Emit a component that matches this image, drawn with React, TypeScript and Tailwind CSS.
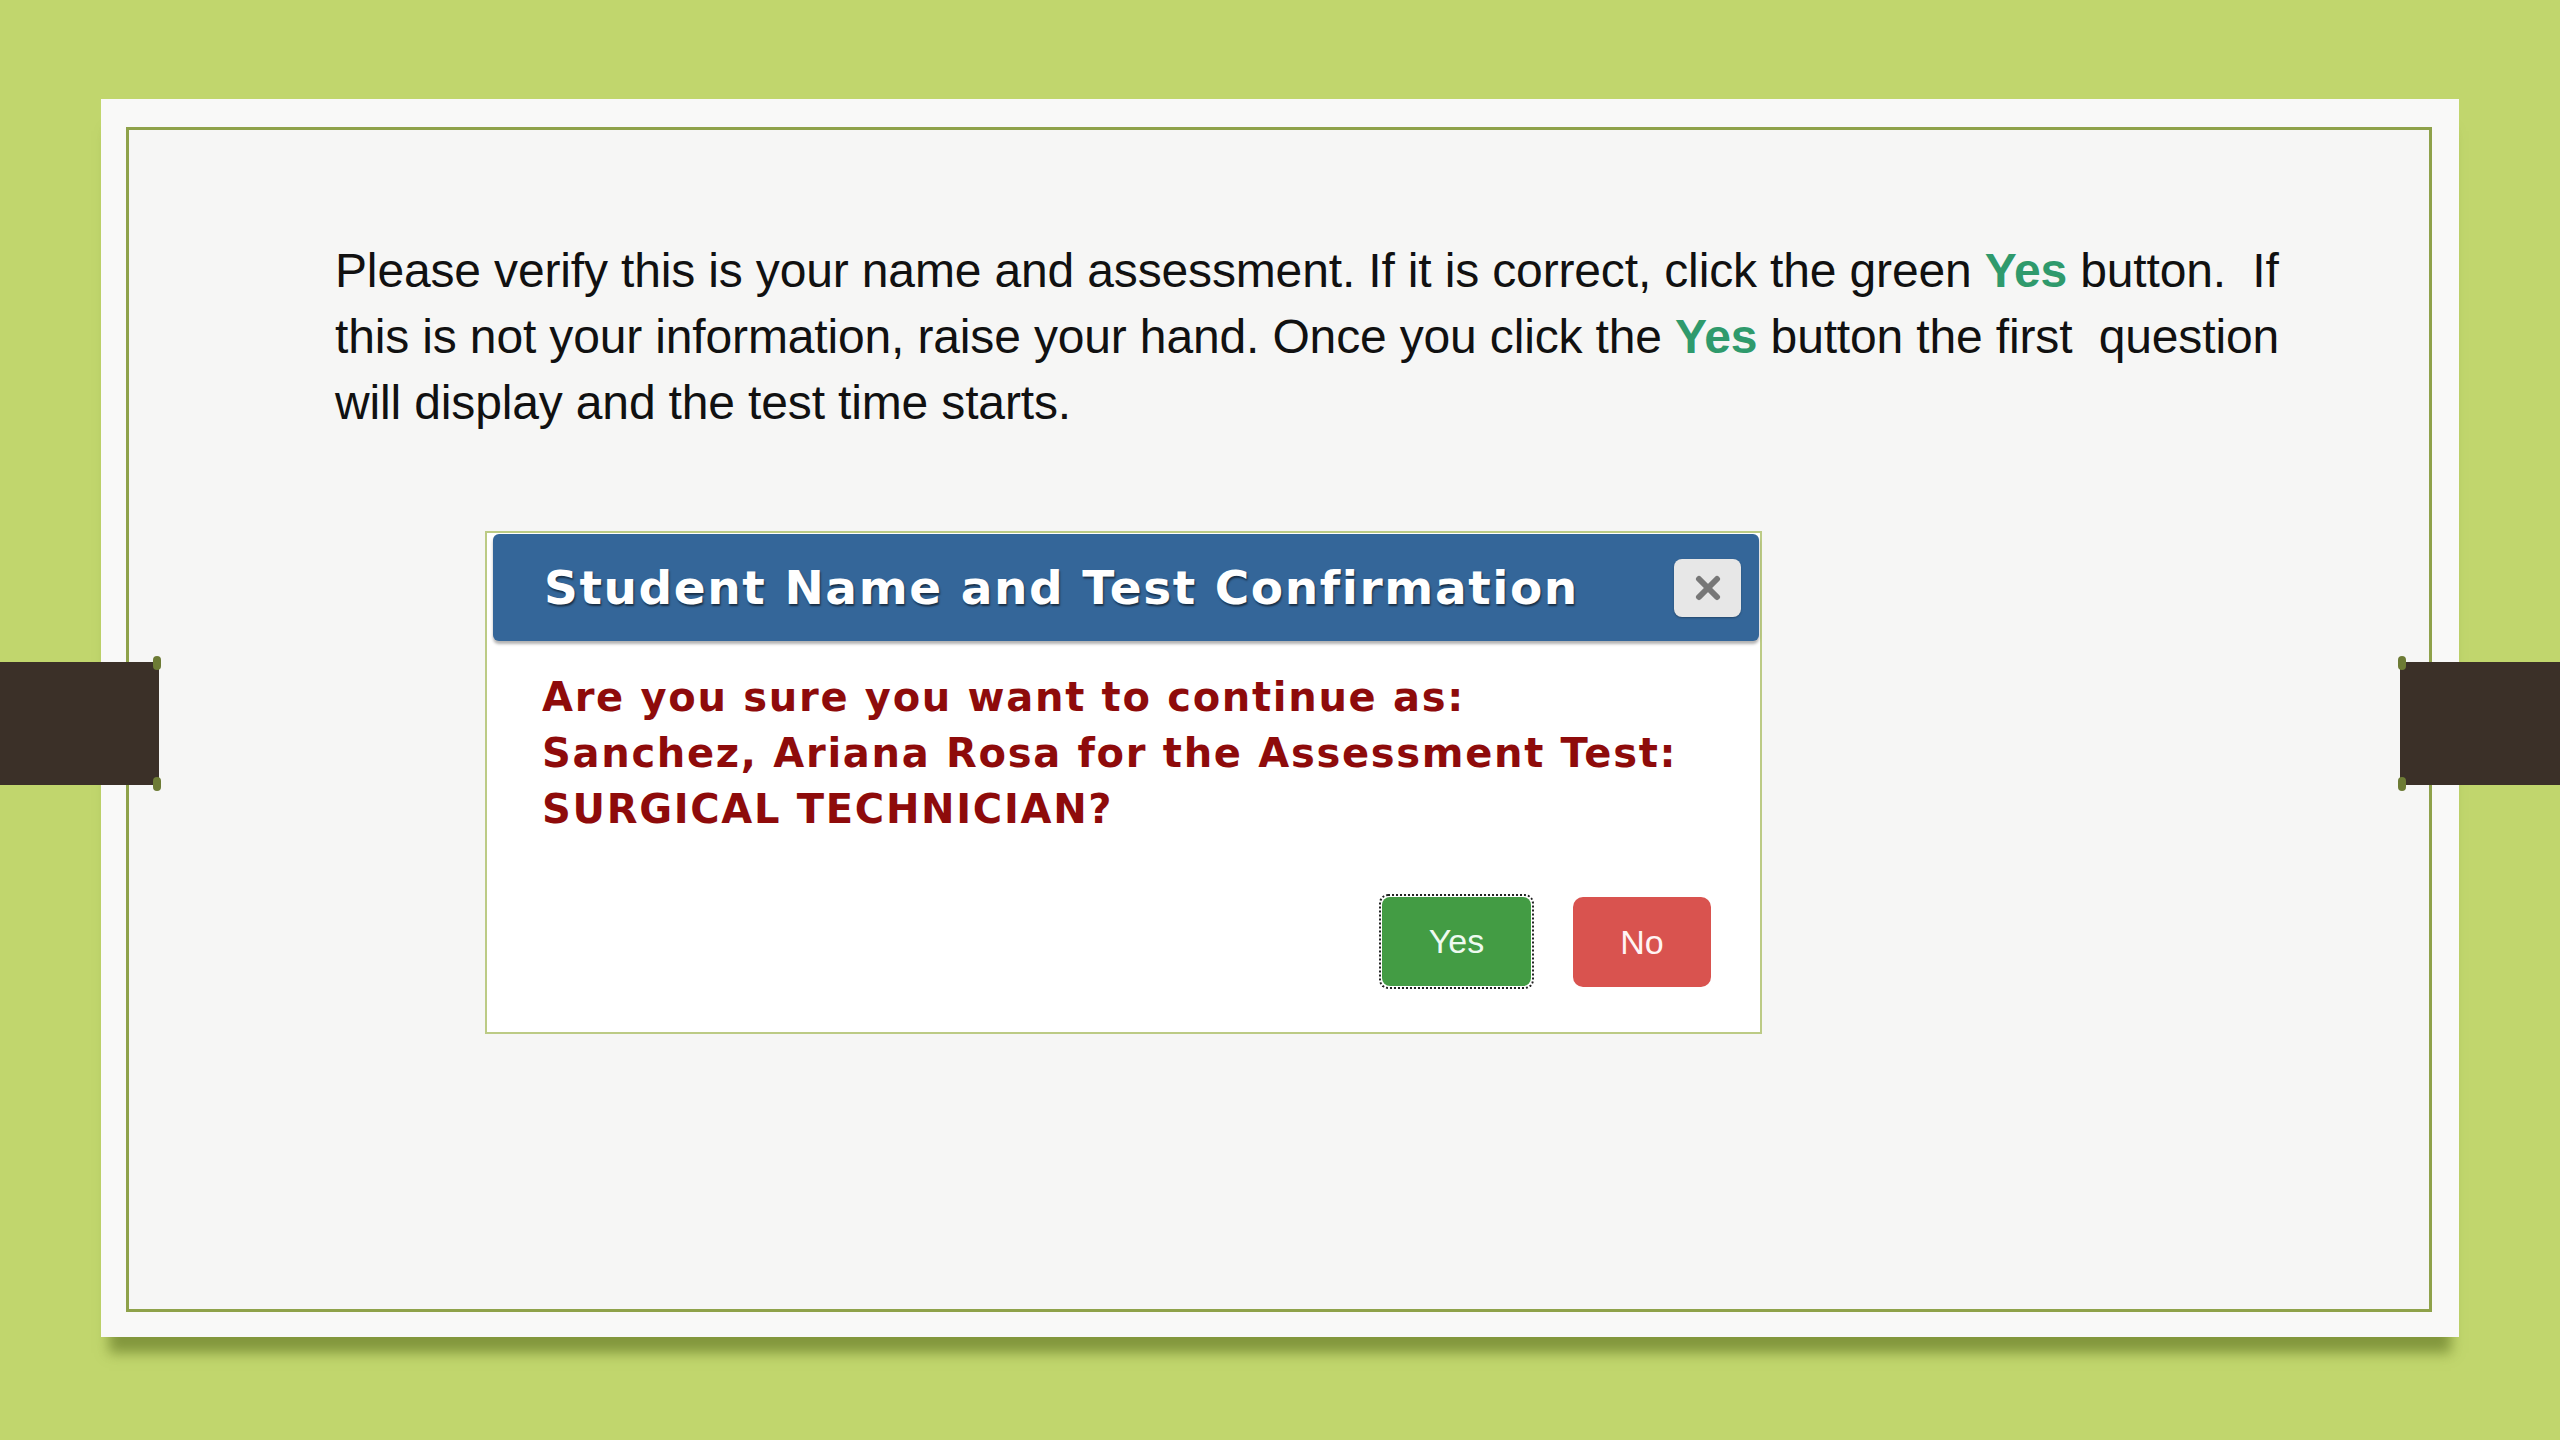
import React from "react";

function Tab({ side }: { side: "left" | "right" }) {
  return (
    <div
      className={
        side === "left"
          ? "absolute left-0 top-[662px] h-[123px] w-[159px] bg-[#3b3028]"
          : "absolute right-0 top-[662px] h-[123px] w-[160px] bg-[#3b3028]"
      }
    >
      <div
        className={
          side === "left"
            ? "absolute right-[-2px] top-[-6px] h-[14px] w-[8px] rounded-full bg-[#6d7b35]"
            : "absolute left-[-2px] top-[-6px] h-[14px] w-[8px] rounded-full bg-[#6d7b35]"
        }
      />
      <div
        className={
          side === "left"
            ? "absolute right-[-2px] bottom-[-6px] h-[14px] w-[8px] rounded-full bg-[#6d7b35]"
            : "absolute left-[-2px] bottom-[-6px] h-[14px] w-[8px] rounded-full bg-[#6d7b35]"
        }
      />
    </div>
  );
}

export default function App() {
  const sans = "font-['Liberation_Sans',Arial,sans-serif]";
  const verd = "font-['DejaVu_Sans',Verdana,sans-serif]";
  return (
    <div className="relative h-[1440px] w-[2560px] overflow-hidden bg-[#c1d66d] pl-[101px] pt-[99px]">
      <div className="h-[1238px] w-[2358px] bg-[#f9f9f8] pb-[25px] pl-[25px] pr-[27px] pt-[28px] shadow-[0_24px_12px_-8px_rgba(90,110,30,0.6)]">
        <div className="h-full w-full border-[3px] border-[#8fa24a] bg-[#f6f6f5] pl-[206px] pt-[108px]">
          <div className={`${sans} text-[48px] leading-[66px] tracking-[-0.15px] text-[#111] whitespace-pre`}>
            <div>
              Please verify this is your name and assessment. If it is correct, click the green{" "}
              <span className="font-bold text-[#2f9a6c]">Yes</span> button.  If
            </div>
            <div>
              this is not your information, raise your hand. Once you click the{" "}
              <span className="font-bold text-[#2f9a6c]">Yes</span> button the first  question
            </div>
            <div>will display and the test time starts.</div>
          </div>

          <div className="ml-[150px] mt-[95px] flex h-[503px] w-[1277px] flex-col border-2 border-[#bccb85] bg-white">
            <div className="ml-[6px] mr-[1px] mt-[1px] flex h-[107px] items-center justify-between rounded-[6px] bg-[#346699] pl-[51px] pr-[18px] shadow-[0_3px_3px_rgba(0,0,0,0.3)]">
              <div
                className={`${verd} text-[47px] font-bold leading-none tracking-[1.6px] text-white [text-shadow:1px_2px_2px_rgba(0,0,0,0.55)]`}
              >
                Student Name and Test Confirmation
              </div>
              <div className="flex h-[58px] w-[67px] items-center justify-center rounded-[8px] bg-[#e7e7e7] shadow-[0_1px_2px_rgba(0,0,0,0.3)]">
                <svg width="26" height="26" viewBox="0 0 26 26">
                  <line x1="4" y1="4" x2="22" y2="22" stroke="#777" strokeWidth="6" strokeLinecap="round" />
                  <line x1="22" y1="4" x2="4" y2="22" stroke="#777" strokeWidth="6" strokeLinecap="round" />
                </svg>
              </div>
            </div>

            <div
              className={`${verd} pl-[55px] pt-[28px] text-[40px] font-bold leading-[56px] tracking-[1.7px] text-[#8e0b0b]`}
            >
              <div>Are you sure you want to continue as:</div>
              <div>Sanchez, Ariana Rosa for the Assessment Test:</div>
              <div>SURGICAL TECHNICIAN?</div>
            </div>

            <div className="mt-auto flex justify-end gap-[39px] pb-[43px] pr-[49px]">
              <div className="rounded-[9px] border-2 border-dotted border-[#222] p-[1px]">
                <div
                  className={`${sans} flex h-[89px] w-[149px] items-center justify-center rounded-[8px] bg-[#439c44] text-[34px] text-[#eefaf0]`}
                >
                  Yes
                </div>
              </div>
              <div
                className={`${sans} mt-[3px] flex h-[90px] w-[138px] items-center justify-center rounded-[10px] bg-[#d9534f] text-[34px] text-[#fff4f4]`}
              >
                No
              </div>
            </div>
          </div>
        </div>
      </div>
      <Tab side="left" />
      <Tab side="right" />
    </div>
  );
}
